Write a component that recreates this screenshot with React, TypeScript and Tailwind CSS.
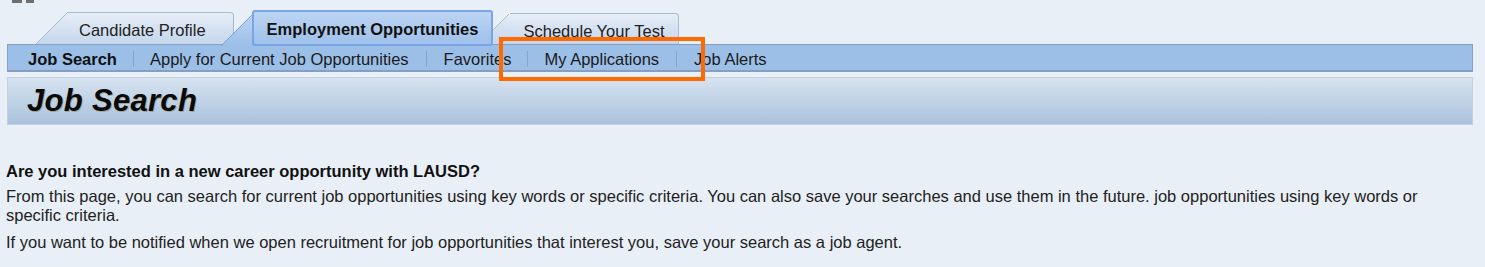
import React from "react";

const Slant = ({ active }: { active?: boolean }) => (
  <svg width="32" height="33" viewBox="0 0 32 33" className="block shrink-0">
    <defs>
      <linearGradient id={active ? "ga" : "gi"} x1="0" y1="0" x2="0" y2="1">
        <stop offset="0" stopColor={active ? "#bcd4f3" : "#e6edf6"} />
        <stop offset="1" stopColor={active ? "#9dbfe9" : "#c5d7ed"} />
      </linearGradient>
    </defs>
    <polygon points="0,33 32,1 32,33" fill={`url(#${active ? "ga" : "gi"})`} />
    <line x1="0" y1="33" x2="32" y2="1" stroke={active ? "#6f9ddf" : "#a7bbd3"} strokeWidth="1" />
  </svg>
);

export default function App() {
  return (
    <div
      className="relative w-[1485px] h-[267px] overflow-hidden bg-[#e9eff6]"
      style={{ fontFamily: '"Liberation Sans", Arial, sans-serif' }}
    >
      {/* top-left fragment */}
      <div className="absolute left-[12px] top-0 flex gap-[4px]">
        <div className="w-[10px] h-[3px] bg-[#6f6f6f]" />
        <div className="w-[8px] h-[3px] bg-[#6f6f6f]" />
      </div>

      {/* tabs */}
      <div className="flex items-end h-[44px] pl-[36px]">
        {/* Candidate Profile */}
        <div className="relative z-20 flex items-end">
          <Slant />
          <div className="w-[167px] h-[32px] -ml-px flex items-center justify-start pl-[12px] rounded-tr-[4px] border-t border-r border-[#a7bbd3] bg-gradient-to-b from-[#e6edf6] to-[#c5d7ed] pt-[3px] text-[16.5px] text-[#222]">
            Candidate Profile
          </div>
        </div>
        {/* Employment Opportunities (active) */}
        <div className="relative z-30 -ml-[13px] mb-[-2px] flex items-end">
          <Slant active />
          <div className="w-[241px] h-[36px] -ml-px flex items-center justify-center rounded-[3px] border-2 border-[#77a5e6] bg-gradient-to-b from-[#bcd4f3] to-[#9fc0ea] pt-[2px] text-[16.5px] font-bold text-[#111]">
            Employment Opportunities
          </div>
        </div>
        {/* Schedule Your Test */}
        <div className="relative z-10 -ml-[14px] flex items-end">
          <div className="w-[32px] h-[30px] overflow-hidden flex items-end">
            <Slant />
          </div>
          <div className="w-[169px] h-[31px] -ml-px flex items-center justify-center rounded-tr-[4px] border-t border-r border-[#a7bbd3] bg-gradient-to-b from-[#e6edf6] to-[#c5d7ed] pt-[4px] text-[16.5px] text-[#222]">
            Schedule Your Test
          </div>
        </div>
      </div>

      {/* sub nav */}
      <div className="relative z-20 ml-[7px] w-[1466px] h-[28px] flex items-center border border-b-2 border-[#869fc0] bg-[#9cbfe8] pt-[3px] text-[16.5px] text-[#1b1b1b]">
        <span className="pl-[20px] font-bold text-[#111]">Job Search</span>
        <span className="mx-[16px] w-px h-[16px] bg-[#86a3c8]" />
        <span>Apply for Current Job Opportunities</span>
        <span className="ml-[17px] mr-[17px] w-px h-[16px] bg-[#86a3c8]" />
        <span>Favorites</span>
        <span className="mx-[16px] w-px h-[16px] bg-[#86a3c8]" />
        <span>My Applications</span>
        <span className="mx-[17px] w-px h-[16px] bg-[#86a3c8]" />
        <span>Job Alerts</span>
      </div>

      {/* title bar */}
      <div className="mt-[5px] ml-[7px] w-[1466px] h-[48px] flex items-center border border-[#c3d0de] bg-gradient-to-b from-[#d7e3f0] to-[#a9c2dc]">
        <h1
          className="pl-[19px] text-[31px] font-bold italic text-[#0a0a0a] tracking-[0.3px]"
          style={{ textShadow: "1px 1px 0 rgba(120,90,0,0.35)" }}
        >
          Job Search
        </h1>
      </div>

      {/* body */}
      <div className="pl-[6px] pt-[37px] text-[16.5px] leading-[19px] text-[#222]">
        <p className="font-bold text-[#111]">Are you interested in a new career opportunity with LAUSD?</p>
        <p className="mt-[6px] w-[1425px]">
          From this page, you can search for current job opportunities using key words or specific criteria. You can also save your searches and use them in the future. job opportunities using key words or specific criteria.
        </p>
        <p className="mt-[8px]">
          If you want to be notified when we open recruitment for job opportunities that interest you, save your search as a job agent.
        </p>
      </div>

      {/* highlight */}
      <div className="absolute left-[499px] top-[37px] w-[206px] h-[44px] border-[4px] border-[#ff6a00] z-40" />
    </div>
  );
}
